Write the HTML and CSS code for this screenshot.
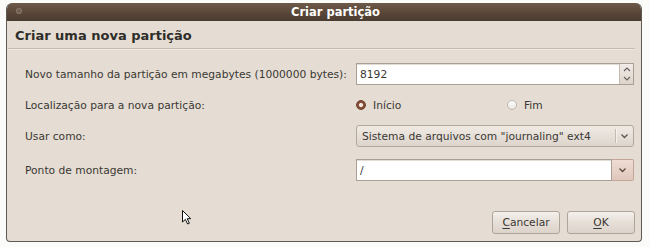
FILE: index.html
```html
<!DOCTYPE html>
<html>
<head>
<meta charset="utf-8">
<link rel="stylesheet" href="styles.css">
</head>
<body>
<div class="window">
  <div class="titlebar">
    <span class="dot"></span>
    <span class="title">Criar partição</span>
  </div>
  <div class="content">
    <div class="heading">Criar uma nova partição</div>
    <div class="sep"></div>
    <div class="form">
      <div class="label">Novo tamanho da partição em megabytes (1000000 bytes):</div>
      <div class="spin">
        <span class="spin-value">8192</span>
        <span class="spin-btns">
          <svg width="8" height="5" viewBox="0 0 8 5"><path d="M1 4 L4 1 L7 4" fill="none" stroke="#6a645e" stroke-width="1.2"/></svg>
          <svg width="8" height="5" viewBox="0 0 8 5"><path d="M1 1 L4 4 L7 1" fill="none" stroke="#6a645e" stroke-width="1.2"/></svg>
        </span>
      </div>

      <div class="label">Localização para a nova partição:</div>
      <div class="radios">
        <span class="radio"><span class="radio-mark on"></span>Início</span>
        <span class="radio"><span class="radio-mark"></span>Fim</span>
      </div>

      <div class="label">Usar como:</div>
      <div class="combo">
        <span class="combo-text">Sistema de arquivos com "journaling" ext4</span>
        <span class="combo-arrow">
          <svg width="9" height="6" viewBox="0 0 9 6"><path d="M1.5 1.5 L4.5 4.5 L7.5 1.5" fill="none" stroke="#5c5650" stroke-width="1.3"/></svg>
        </span>
      </div>

      <div class="label last-row">Ponto de montagem:</div>
      <div class="combo-entry last-row">
        <span class="entry">/</span>
        <span class="drop-btn">
          <svg width="9" height="6" viewBox="0 0 9 6"><path d="M1.5 1.5 L4.5 4.5 L7.5 1.5" fill="none" stroke="#5a4842" stroke-width="1.3"/></svg>
        </span>
      </div>
    </div>
    <div class="actions">
      <button class="btn"><u>C</u>ancelar</button>
      <button class="btn"><u>O</u>K</button>
    </div>
  </div>
</div>
<svg class="cursor" width="12" height="16" viewBox="0 0 12 16">
  <path d="M1.5 1.5 L1.5 13 L4.3 10.4 L6.6 15 L8.4 14.2 L6.2 9.7 L9.8 9.7 Z" fill="#fff" stroke="#111" stroke-width="1" stroke-linejoin="round"/>
</svg>
</body>
</html>
```

FILE: styles.css
```css
html, body {
  margin: 0;
  padding: 0;
  background: #fbfbfa;
}

body {
  width: 650px;
  height: 247px;
  overflow: hidden;
  font-family: "DejaVu Sans", "Liberation Sans", sans-serif;
  color: #3a3834;
}

.window {
  margin: 3px 0 0 6px;
  width: 636px;
  height: 239px;
  box-sizing: border-box;
  background: #e5ddd3;
  border: 1px solid #5e5953;
  border-top: none;
  border-radius: 6px 6px 4px 4px;
  display: flex;
  flex-direction: column;
  overflow: hidden;
}

.titlebar {
  height: 18px;
  flex: none;
  background: linear-gradient(#6f5a4a, #5a4839 50%, #4b3c31);
  border-radius: 5px 5px 0 0;
  display: flex;
  align-items: center;
  position: relative;
}

.dot {
  position: absolute;
  left: 9px;
  top: 5px;
  width: 6px;
  height: 6px;
  border-radius: 50%;
  background: #6f5e52;
  box-shadow: inset 0 0 0 1px #86766a;
}

.title {
  flex: 1;
  text-align: center;
  padding-left: 23px;
  color: #ffffff;
  font-weight: bold;
  font-size: 11.5px;
  line-height: 18px;
}

.content {
  flex: 1;
  display: flex;
  flex-direction: column;
}

.heading {
  padding: 7px 0 0 8px;
  font-size: 13px;
  font-weight: bold;
  line-height: 16px;
  color: #2f2d2a;
}

.sep {
  margin: 4px 6px 0 1px;
  border-top: 1px solid #c6bcb1;
  border-bottom: 1px solid #efe9e3;
}

.form {
  margin-top: 13px;
  padding-left: 18px;
  display: grid;
  grid-template-columns: 331px 278px;
  grid-template-rows: 22px 20px 22px 24px;
  row-gap: 10px;
  font-size: 10.7px;
}

.last-row {
  margin-top: 2px;
}

.label {
  display: flex;
  align-items: center;
}

.spin {
  display: flex;
  background: #ffffff;
  border: 1px solid #a99f94;
  box-shadow: inset 0 1px 0 #e2dcd5;
}

.spin-value {
  flex: 1;
  display: flex;
  align-items: center;
  padding-left: 3px;
}

.spin-btns {
  width: 13px;
  display: flex;
  flex-direction: column;
  justify-content: space-evenly;
  align-items: center;
  background: linear-gradient(#f1ece7, #ddd5cc);
  border-left: 1px solid #c4bab0;
}

.spin-btns svg {
  display: block;
}

.radios {
  display: grid;
  grid-template-columns: 151px auto;
  align-items: center;
}

.radio {
  display: flex;
  align-items: center;
  gap: 7px;
}

.radio-mark {
  width: 10px;
  height: 10px;
  box-sizing: border-box;
  border-radius: 50%;
  border: 1px solid #bfb6ac;
  background: linear-gradient(#ffffff, #ebe5df);
}

.radio-mark.on {
  border: 1px solid #6e3f2b;
  background: radial-gradient(circle, #f3e9e2 0 1.8px, #8a5039 2.3px, #7a4631 100%);
}

.combo {
  display: flex;
  border: 1px solid #b2a89d;
  border-radius: 3px;
  background: linear-gradient(#f0eae4, #ddd5cc);
}

.combo-text {
  flex: 1;
  display: flex;
  align-items: center;
  padding-left: 5px;
}

.combo-arrow {
  width: 17px;
  margin: 3px 0;
  border-left: 1px solid #c5bbb0;
  box-shadow: inset 1px 0 0 #f4f0ec;
  display: flex;
  align-items: center;
  justify-content: center;
}

.combo-entry {
  display: flex;
}

.entry {
  flex: 1;
  display: flex;
  align-items: center;
  padding-left: 3px;
  background: #ffffff;
  border: 1px solid #a99f94;
  box-shadow: inset 0 1px 0 #e2dcd5;
}

.drop-btn {
  width: 21px;
  display: flex;
  align-items: center;
  justify-content: center;
  border: 1px solid #c4a597;
  border-left: none;
  border-radius: 0 2px 2px 0;
  background: linear-gradient(#efdcd4, #e0c7bc);
}

.actions {
  margin-top: auto;
  padding: 0 6px 7px 0;
  display: flex;
  justify-content: flex-end;
  gap: 7px;
}

.btn {
  width: 68px;
  height: 23px;
  margin: 0;
  padding: 0;
  font-family: "DejaVu Sans", "Liberation Sans", sans-serif;
  font-size: 10.7px;
  color: #3a3834;
  border: 1px solid #aea498;
  border-radius: 3px;
  background: linear-gradient(#f4f0ec, #e6dfd8 50%, #dcd3ca);
}

.btn u {
  text-decoration-thickness: 1px;
  text-underline-offset: 2px;
}

.cursor {
  position: absolute;
  left: 181px;
  top: 209px;
}
```
